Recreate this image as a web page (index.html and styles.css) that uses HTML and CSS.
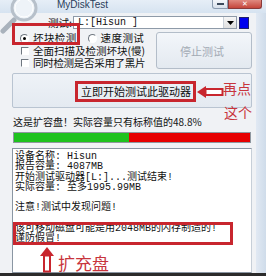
FILE: index.html
```html
<!DOCTYPE html>
<html>
<head>
<meta charset="utf-8">
<title>MyDiskTest</title>
<link rel="stylesheet" href="styles.css">
</head>
<body>
<div class="window">
  <div class="titlebar">
    <span class="title">MyDiskTest</span>
    <div class="controls">
      <span class="btn-min"><span class="dash"></span></span>
      <span class="btn-close">✕</span>
    </div>
  </div>
  <div class="main">
    <div class="client">
      <div class="drive-row">
        <span class="drive-label">测试:</span>
        <div class="combo">
          <span class="combo-text">L:[Hisun ]</span>
          <span class="combo-btn"><svg width="7" height="4" viewBox="0 0 7 4"><polygon points="0,0 7,0 3.5,4" fill="#000"/></svg></span>
        </div>
        <span class="swatch"></span>
      </div>
      <div class="options-row">
        <div class="options">
          <div class="radios">
            <span class="opt"><span class="radio checked"></span>坏块检测</span>
            <span class="opt opt-second"><span class="radio"></span>速度测试</span>
          </div>
          <span class="opt opt-cb1"><span class="check"></span>全面扫描及检测坏块(慢)</span>
          <span class="opt opt-cb2"><span class="check"></span>同时检测是否采用了黑片</span>
        </div>
        <div class="stop-btn">停止测试</div>
      </div>
      <div class="start-btn">立即开始测试此驱动器</div>
      <div class="status">这是扩容盘！实际容量只有标称值的48.8%</div>
      <div class="progress"><div class="progress-fill" style="width:48.8%"></div></div>
      <div class="log">
        <div class="line">设备名称: Hisun</div>
        <div class="line">报告容量: 4087MB</div>
        <div class="line">开始测试驱动器[L:]...测试结束!</div>
        <div class="line">实际容量: 至多1995.99MB</div>
        <div class="line">&nbsp;</div>
        <div class="line">注意!测试中发现问题!</div>
        <div class="line">&nbsp;</div>
        <div class="line">该可移动磁盘可能是用2048MB的闪存制造的!</div>
        <div class="line">谨防假冒!</div>
      </div>
    </div>
    <div class="frame-right"></div>
  </div>
  <div class="bottom-edge"></div>

  <svg class="magnifier" width="46" height="34" viewBox="0 0 46 34">
    <line x1="14" y1="20" x2="3" y2="31" stroke="#a9b2bc" stroke-width="5" stroke-linecap="round"/>
    <circle cx="24" cy="8" r="12" fill="#eef3f8" stroke="#b7c0ca" stroke-width="3"/>
    <circle cx="24" cy="8" r="9" fill="none" stroke="#ffffff" stroke-width="1"/>
  </svg>

  <div class="mark mark-radio"></div>
  <div class="mark mark-start"></div>
  <div class="mark mark-warn"></div>

  <svg class="arrow-left" width="28" height="14" viewBox="0 0 28 14">
    <polygon points="1,7 10,1 10,13" fill="#c8262e"/>
    <rect x="9.5" y="4" width="17" height="6" fill="#ffffff" stroke="#c8262e" stroke-width="2"/>
  </svg>
  <span class="note note-1">再点</span>
  <span class="note note-2">这个</span>

  <svg class="arrow-up" width="16" height="27" viewBox="0 0 16 27">
    <polygon points="8,1 15,10 1,10" fill="#c8262e"/>
    <rect x="5" y="9.5" width="6" height="16" fill="#ffffff" stroke="#c8262e" stroke-width="2"/>
  </svg>
  <span class="note note-3">扩充盘</span>
</div>
</body>
</html>
```

FILE: styles.css
```css
html, body {
  margin: 0;
  padding: 0;
  background: #f0f2f5;
}

.window {
  position: relative;
  width: 266px;
  height: 276px;
  overflow: hidden;
  font-family: "Noto Sans CJK SC", "Liberation Sans", sans-serif;
  color: #111;
}

.titlebar {
  height: 13px;
  display: flex;
  align-items: flex-start;
  background: linear-gradient(#e6eef7, #d6e3f0);
}

.title {
  padding-left: 57px;
  font-family: "Liberation Sans", sans-serif;
  font-size: 10px;
  line-height: 10px;
  color: #2a3d5a;
}

.controls {
  margin-left: auto;
  margin-right: 4px;
  display: flex;
}

.btn-min {
  width: 16px;
  height: 9px;
  box-sizing: border-box;
  border: 1px solid #8c9cb0;
  border-top: none;
  border-radius: 0 0 0 3px;
  background: linear-gradient(#f4f7fb, #d8e1ec);
  display: flex;
  align-items: center;
  justify-content: center;
}

.dash {
  width: 7px;
  height: 2px;
  background: #3b4a5c;
}

.btn-close {
  width: 34px;
  height: 9px;
  box-sizing: border-box;
  border: 1px solid #8a3a3a;
  border-top: none;
  border-radius: 0 0 3px 0;
  background: linear-gradient(#e08a80, #c5463b);
  color: #fff;
  font-family: "DejaVu Sans", sans-serif;
  font-size: 7px;
  line-height: 8px;
  text-align: center;
}

.main {
  display: flex;
  height: 260px;
}

.client {
  width: 256px;
  box-sizing: border-box;
  padding: 3px 4px 0 12px;
  background: #f0f2f5;
  display: flex;
  flex-direction: column;
}

.frame-right {
  width: 10px;
  background: linear-gradient(90deg, #e1e9f3, #cfdcea);
}

.drive-row {
  height: 13px;
  display: flex;
  align-items: center;
}

.drive-label {
  margin-left: 36px;
  width: 25px;
  flex: none;
  white-space: nowrap;
  font-size: 10.5px;
  line-height: 13px;
}

.combo {
  width: 164px;
  height: 13px;
  flex: none;
  box-sizing: border-box;
  border: 1px solid #8e9aa8;
  background: #fff;
  display: flex;
  align-items: center;
}

.combo-text {
  flex: 1;
  padding-left: 4px;
  font-family: "Liberation Mono", monospace;
  font-size: 10px;
  line-height: 11px;
}

.combo-btn {
  width: 13px;
  height: 11px;
  box-sizing: border-box;
  border-left: 1px solid #c9d0d8;
  background: linear-gradient(#f6f6f6, #dedede);
  display: flex;
  align-items: center;
  justify-content: center;
}

.swatch {
  width: 10px;
  height: 12px;
  flex: none;
  margin-left: 2px;
  box-sizing: border-box;
  background: #0000ee;
  border: 1px solid #20206a;
}

.options-row {
  margin-top: 3px;
  height: 37px;
  display: flex;
}

.options {
  width: 144px;
  flex: none;
  box-sizing: border-box;
  padding-left: 8px;
  display: flex;
  flex-direction: column;
}

.radios {
  height: 12px;
  display: flex;
}

.opt {
  display: flex;
  align-items: center;
  font-size: 10.5px;
  letter-spacing: 0.4px;
  line-height: 12px;
  white-space: nowrap;
}

.opt-second {
  margin-left: 11px;
}

.opt-cb1 {
  height: 13px;
  letter-spacing: 0;
}

.opt-cb2 {
  height: 12px;
  letter-spacing: -0.3px;
}

.radio {
  width: 9px;
  height: 9px;
  flex: none;
  box-sizing: border-box;
  margin-right: 4px;
  border-radius: 50%;
  border: 1px solid #fff;
  border-top-color: #6f7780;
  border-left-color: #6f7780;
  background: #fff;
  display: flex;
  align-items: center;
  justify-content: center;
}

.radio.checked::after {
  content: "";
  width: 3px;
  height: 3px;
  border-radius: 50%;
  background: #000;
}

.check {
  width: 8px;
  height: 8px;
  flex: none;
  box-sizing: border-box;
  margin-left: 1px;
  margin-right: 4px;
  border: 1px solid #fff;
  border-top-color: #6f7780;
  border-left-color: #6f7780;
  background: #fff;
}

.stop-btn {
  width: 96px;
  height: 37px;
  flex: none;
  box-sizing: border-box;
  border: 1px solid #b3bdc9;
  border-radius: 3px;
  background: linear-gradient(#f3f6fa, #e3e9f0);
  color: #a2aab4;
  font-size: 11px;
  display: flex;
  align-items: center;
  justify-content: center;
  padding-right: 4px;
}

.start-btn {
  margin-top: 4px;
  width: 240px;
  height: 35px;
  box-sizing: border-box;
  border: 1px solid #b9c4d1;
  border-radius: 2px;
  background: linear-gradient(#eef2f7, #e4eaf1);
  font-size: 11px;
  display: flex;
  align-items: center;
  justify-content: center;
  padding-left: 8px;
}

.status {
  margin-top: 8px;
  height: 12px;
  font-size: 10px;
  line-height: 12px;
  white-space: nowrap;
  padding-left: 1px;
}

.progress {
  margin-top: 4px;
  margin-left: 1px;
  width: 238px;
  height: 11px;
  box-sizing: border-box;
  border: 1px solid #8f979f;
  background: #e60000;
  display: flex;
}

.progress-fill {
  height: 100%;
  background: #1ec21e;
}

.log {
  margin-top: 5px;
  width: 240px;
  height: 125px;
  box-sizing: border-box;
  border: 1px solid #8a96a3;
  border-right-color: #c7cfd8;
  background: #fff;
  padding: 3px 2px 0 2px;
  font-family: "Liberation Mono", "Noto Sans CJK SC", monospace;
  font-size: 10px;
  line-height: 10.3px;
}

.line {
  height: 10.3px;
  white-space: nowrap;
}

.bottom-edge {
  height: 3px;
  background: #2b2b2b;
}

.magnifier {
  position: absolute;
  left: 0;
  top: 0;
}

.mark {
  position: absolute;
  box-sizing: border-box;
  border: 3px solid #c8262e;
}

.mark-radio {
  left: 12px;
  top: 23px;
  width: 68px;
  height: 22px;
}

.mark-start {
  left: 75px;
  top: 81px;
  width: 121px;
  height: 21px;
}

.mark-warn {
  left: 13px;
  top: 222px;
  width: 220px;
  height: 23px;
}

.arrow-left {
  position: absolute;
  left: 196px;
  top: 85px;
}

.arrow-up {
  position: absolute;
  left: 39px;
  top: 246px;
}

.note {
  position: absolute;
  color: #c8343c;
  white-space: nowrap;
  font-family: "Noto Sans CJK SC", sans-serif;
}

.note-1 {
  left: 223px;
  top: 80px;
  font-size: 14px;
  line-height: 16px;
}

.note-2 {
  left: 224px;
  top: 104px;
  font-size: 14px;
  line-height: 16px;
}

.note-3 {
  left: 58px;
  top: 253px;
  font-size: 17px;
  line-height: 19px;
}
```
